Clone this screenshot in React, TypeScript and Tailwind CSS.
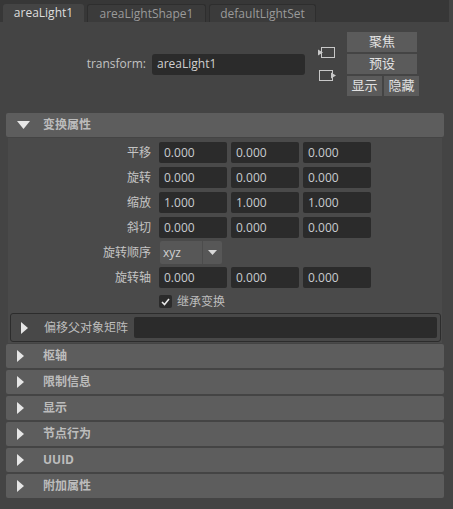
import React from 'react';

const font = { fontFamily: '"Open Sans", "Noto Sans CJK SC", sans-serif' };

function Field({ value }: { value: string }) {
  return (
    <div className="w-[68px] h-[21px] bg-[#2b2b2b] rounded-[2px] flex items-center pl-[5px] text-[#c9ccd0]">
      {value}
    </div>
  );
}

function VecRow({ label, values }: { label: string; values: string[] }) {
  return (
    <div className="flex items-center h-[21px]">
      <div className="w-[143px] text-right text-[#c4c4c4]">{label}</div>
      <div className="ml-[8px] flex gap-[4px]">
        {values.map((v, i) => (
          <Field key={i} value={v} />
        ))}
      </div>
    </div>
  );
}

function RightTri() {
  return (
    <svg width="7" height="12" viewBox="0 0 7 12">
      <path d="M0 0 L7 6 L0 12 Z" fill="#e6e6e6" />
    </svg>
  );
}

function Header({ title, open }: { title: string; open?: boolean }) {
  return (
    <div className="mx-[6px] w-[438px] h-[24px] bg-[#5d5d5d] rounded-[2px] flex items-center shrink-0">
      <div className="w-[37px] flex justify-start pl-[11px]">
        {open ? (
          <svg width="13" height="8" viewBox="0 0 13 8">
            <path d="M0 0 L13 0 L6.5 8 Z" fill="#e6e6e6" />
          </svg>
        ) : (
          <RightTri />
        )}
      </div>
      <span className="font-bold text-[#bcbcbc]">{title}</span>
    </div>
  );
}

function Btn({ label, w }: { label: string; w: string }) {
  return (
    <div className={`${w} h-[20px] bg-[#5b5b5b] flex items-center justify-center text-[#e2e2e2] text-[13px]`}>
      {label}
    </div>
  );
}

export default function App() {
  return (
    <div className="w-[453px] h-[509px] bg-[#444444] overflow-hidden text-[12px] flex flex-col" style={font}>
      {/* tabs */}
      <div className="h-[22px] w-[449px] bg-[#373737] flex items-end pl-[3px] gap-[3px] shrink-0">
        <div className="w-[81px] h-[18px] bg-[#444444] rounded-t-[3px] flex items-center justify-center text-[#dedede]">
          areaLight1
        </div>
        <div className="w-[119px] h-[18px] bg-[#3b3b3b] border border-b-0 border-[#2e2e2e] rounded-t-[3px] flex items-center justify-center text-[#9a9a9a]">
          areaLightShape1
        </div>
        <div className="w-[107px] h-[18px] bg-[#3b3b3b] border border-b-0 border-[#2e2e2e] rounded-t-[3px] flex items-center justify-center text-[#9a9a9a]">
          defaultLightSet
        </div>
      </div>

      {/* transform row */}
      <div className="flex items-center h-[64px] mt-[10px] mb-[17px] shrink-0">
        <div className="w-[146px] text-right text-[#c2c2c2]">transform:</div>
        <div className="ml-[6px] w-[153px] h-[21px] bg-[#2b2b2b] rounded-[3px] flex items-center pl-[5px] text-[#d0d0d0]">
          areaLight1
        </div>
        <div className="ml-[13px] flex flex-col gap-[10px]">
          <svg width="18" height="13" viewBox="0 0 18 13">
            <rect x="3.5" y="1.5" width="13" height="10" fill="none" stroke="#c8c8c8" />
            <path d="M0 3.5 L5 6.5 L0 9.5 Z" fill="#c8c8c8" />
          </svg>
          <svg width="18" height="13" viewBox="0 0 18 13">
            <rect x="1.5" y="1.5" width="13" height="10" fill="none" stroke="#c8c8c8" />
            <path d="M13 3.5 L18 6.5 L13 9.5 Z" fill="#c8c8c8" />
          </svg>
        </div>
        <div className="ml-[11px] flex flex-col gap-[2px]">
          <Btn label="聚焦" w="w-[70px]" />
          <Btn label="预设" w="w-[70px]" />
          <div className="flex gap-[2px]">
            <Btn label="显示" w="w-[35px]" />
            <Btn label="隐藏" w="w-[35px]" />
          </div>
        </div>
      </div>

      <Header title="变换属性" open />

      {/* body */}
      <div className="mx-[8px] w-[434px] bg-[#4a4a4a] pt-[4px] pb-[1px] mt-[1px] flex flex-col shrink-0">
        <div className="flex flex-col gap-[4px]">
          <VecRow label="平移" values={['0.000', '0.000', '0.000']} />
          <VecRow label="旋转" values={['0.000', '0.000', '0.000']} />
          <VecRow label="缩放" values={['1.000', '1.000', '1.000']} />
          <VecRow label="斜切" values={['0.000', '0.000', '0.000']} />
        </div>
        <div className="flex items-center h-[23px] mt-[3px]">
          <div className="w-[143px] text-right text-[#c4c4c4]">旋转顺序</div>
          <div className="ml-[9px] w-[62px] h-[23px] bg-[#575757] rounded-[2px] flex items-center">
            <span className="w-[42px] pl-[3px] text-[#d0d0d0]">xyz</span>
            <div className="w-[1px] h-[23px] bg-[#4c4c4c]" />
            <div className="flex-1 flex justify-center">
              <svg width="9" height="5" viewBox="0 0 9 5">
                <path d="M0 0 L9 0 L4.5 5 Z" fill="#d8d8d8" />
              </svg>
            </div>
          </div>
        </div>
        <div className="mt-[3px]">
          <VecRow label="旋转轴" values={['0.000', '0.000', '0.000']} />
        </div>
        <div className="flex items-center h-[13px] mt-[7px] ml-[151px] gap-[5px]">
          <div className="w-[13px] h-[13px] bg-[#2b2b2b] rounded-[2px] flex items-center justify-center">
            <svg width="9" height="8" viewBox="0 0 9 8">
              <path d="M1 4 L3.5 6.5 L8 1" fill="none" stroke="#e8e8e8" strokeWidth="1.6" />
            </svg>
          </div>
          <span className="text-[#bdbdbd]">继承变换</span>
        </div>
        <div className="ml-[2px] mt-[5px] w-[431px] h-[29px] border border-[#2c2c2c] rounded-[3px] bg-[#484848] flex items-center">
          <div className="pl-[10px] w-[33px]">
            <RightTri />
          </div>
          <span className="text-[#bdbdbd] w-[90px]">偏移父对象矩阵</span>
          <div className="w-[303px] h-[21px] bg-[#2b2b2b] rounded-[2px]" />
        </div>
      </div>

      <div className="flex flex-col gap-[2px] mt-[1px]">
        <Header title="枢轴" />
        <Header title="限制信息" />
        <Header title="显示" />
        <Header title="节点行为" />
        <Header title="UUID" />
        <Header title="附加属性" />
      </div>
    </div>
  );
}
